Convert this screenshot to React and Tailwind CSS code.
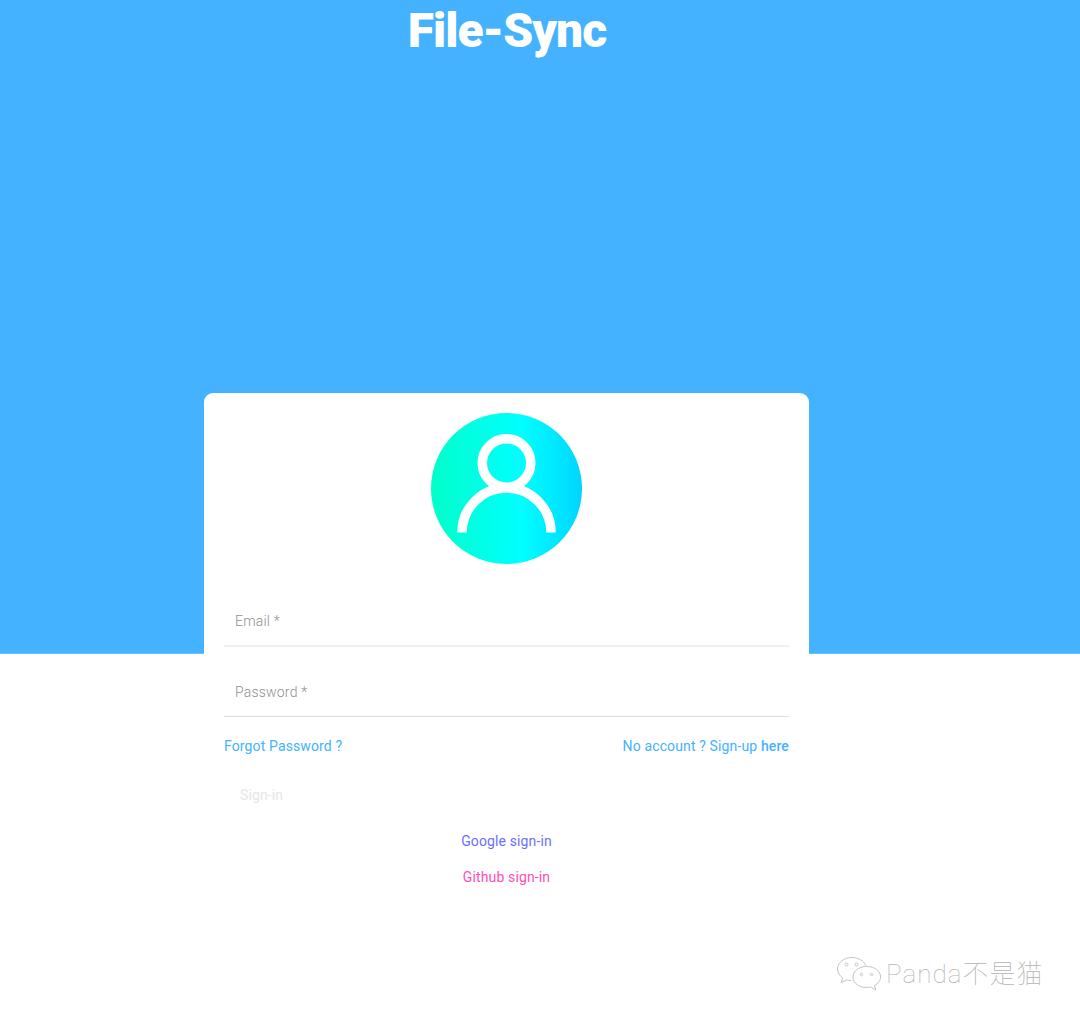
import React from "react";

function Wechat() {
  return (
    <svg width="46" height="38" viewBox="0 0 46 38" fill="none" stroke="#c4c4c4" strokeWidth="1" className="shrink-0">
      <path d="M16 2.500C8 2.500 1.500 7.600 1.500 14c0 3.600 2 6.800 5.200 8.900L5.400 27.500l5.200-2.700c1.500.5 3 .7 4.600.8" />
      <path d="M16 2.500c6.600 0 12.200 3.500 13.900 8.400" />
      <circle cx="10.500" cy="9.500" r="1.500" />
      <circle cx="20.500" cy="9.500" r="1.500" />
      <path d="M30.500 11.500c-7.600 0-13.500 4.600-13.500 10.500s5.900 10.500 13.500 10.500c1.500 0 2.900-.2 4.200-.6l5 3.100-1.200-4.600c3.700-1.900 6.100-5 6.100-8.400 0-5.900-6-10.500-13.600-10.500z" />
      <circle cx="25.500" cy="19.500" r="1.200" />
      <circle cx="35.500" cy="19.500" r="1.200" />
    </svg>
  );
}

function Field({ label, lineClass }) {
  return (
    <div className={`flex items-center pl-[11px] text-[14px] text-[#8f8f8f] font-light tracking-[0.2px] ${lineClass}`}>
      {label}
    </div>
  );
}

export default function App() {
  return (
    <div className="relative h-[1021px] overflow-hidden bg-white font-['Roboto','Liberation_Sans',sans-serif]">
      <header className="h-[654px] bg-[#44b2ff] border-b border-[#66c0ff]">
        <div className="w-[1014px] text-center">
          <h1 className="text-[48px] leading-[62px] font-black text-white tracking-[-1px]">File-Sync</h1>
        </div>
      </header>

      <main className="relative w-[605px] ml-[204px] -mt-[261px] bg-white rounded-t-[9px] px-5 pt-5">
        <div className="flex justify-center">
          <div className="w-[151px] h-[151px] rounded-full bg-gradient-to-r from-[#00ffc8] via-[#00ffff] via-60% to-[#00d5ff] flex items-center justify-center">
            <svg width="151" height="151" viewBox="0 0 151 151" fill="none" stroke="white" strokeWidth="9.500">
              <circle cx="75.500" cy="50" r="24.250" />
              <path d="M31 119.500c0-24.500 19.900-44.500 44.500-44.500S120 95 120 119.500" />
            </svg>
          </div>
        </div>

        <div className="mt-[29px]">
          <Field label="Email *" lineClass="h-[54px] pt-[4px] border-b-2 border-[#efefef]" />
        </div>
        <div className="mt-[16px]">
          <Field label="Password *" lineClass="h-[54px] pt-[5px] border-b border-[#dcdcdc]" />
        </div>

        <div className="flex justify-between mt-[20px] text-[14px] leading-[18px] tracking-[0.13px] text-[#44b2ff]">
          <span>Forgot Password ?</span>
          <span>
            No account ? Sign-up <span className="font-medium">here</span>
          </span>
        </div>

        <div className="mt-[31px] pl-4 text-[14px] leading-[18px] tracking-[0.13px] text-[#e6e6e6]">Sign-in</div>

        <div className="mt-[28px] text-center text-[14px] leading-[18px] tracking-[0.13px] text-[#6a6fff]">Google sign-in</div>
        <div className="mt-[18px] text-center text-[14px] leading-[18px] tracking-[0.13px] text-[#ff4dbb]">Github sign-in</div>
      </main>

      <div className="absolute left-[836px] top-[955px] flex items-center gap-[4px] text-[26px] leading-[36px] text-[#b4b4b4] font-thin font-['Roboto','Noto_Sans_CJK_SC',sans-serif] tracking-[1px]">
        <Wechat />
        <span>Panda不是猫</span>
      </div>
    </div>
  );
}
